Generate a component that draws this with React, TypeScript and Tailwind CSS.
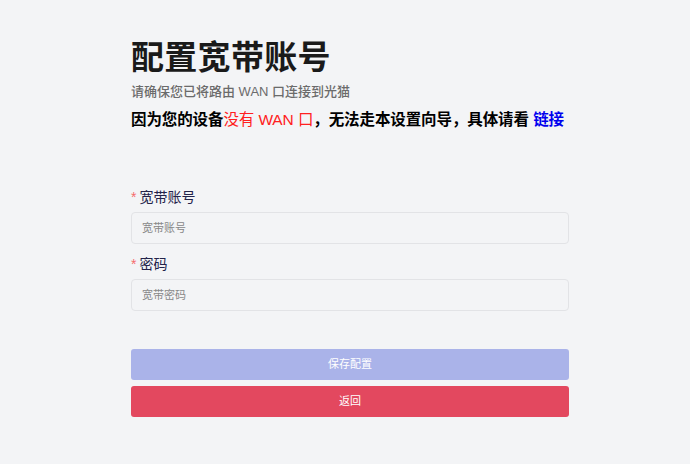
const FONT = '"Liberation Sans", "Noto Sans CJK SC", sans-serif';

export default function App() {
  return (
    <div
      className="min-h-[464px] bg-[#f3f4f6] text-[#1f1f1f]"
      style={{ fontFamily: FONT }}
    >
      <div className="ml-[131px] w-[438px] pt-[38px]">
        <h1 className="text-[33px] font-bold leading-[40px] tracking-[0.3px] text-[#1a1a1a]">配置宽带账号</h1>
        <p className="mt-[4px] text-[13px] font-medium leading-[20px] text-[#6b6b6b]">
          请确保您已将路由 WAN 口连接到光猫
        </p>
        <p className="mt-[6px] whitespace-nowrap text-[15.5px] font-bold leading-[24px] tracking-[-0.1px] text-black">
          因为您的设备<span className="font-normal text-[#ff2020]">没有 WAN 口</span>，无法走本设置向导，具体请看{' '}
          <a className="text-[#0000ee]">链接</a>
        </p>

        <form className="mt-[55px]">
          <label className="flex items-center text-[14px] leading-[20px] text-[#23234a]">
            <span className="mr-[3px] text-[#f56c6c]">*</span>宽带账号
          </label>
          <input
            className="mt-[5px] h-[32px] w-full rounded-[4px] border border-[#e2e3e6] bg-[#f3f4f6] px-[10px] text-[11px] placeholder:text-[#888] outline-none"
            placeholder="宽带账号"
          />
          <label className="mt-[10px] flex items-center text-[14px] leading-[20px] text-[#23234a]">
            <span className="mr-[3px] text-[#f56c6c]">*</span>密码
          </label>
          <input
            type="password"
            className="mt-[5px] h-[32px] w-full rounded-[4px] border border-[#e2e3e6] bg-[#f3f4f6] px-[10px] text-[11px] placeholder:text-[#888] outline-none"
            placeholder="宽带密码"
          />

          <button
            type="button"
            className="mt-[38px] flex h-[31px] w-full items-center justify-center rounded-[3px] bg-[#aab3e9] text-[11px] text-white"
          >
            保存配置
          </button>
          <button
            type="button"
            className="mt-[6px] flex h-[31px] w-full items-center justify-center rounded-[3px] bg-[#e3485f] text-[11px] text-white"
          >
            返回
          </button>
        </form>
      </div>
    </div>
  );
}
